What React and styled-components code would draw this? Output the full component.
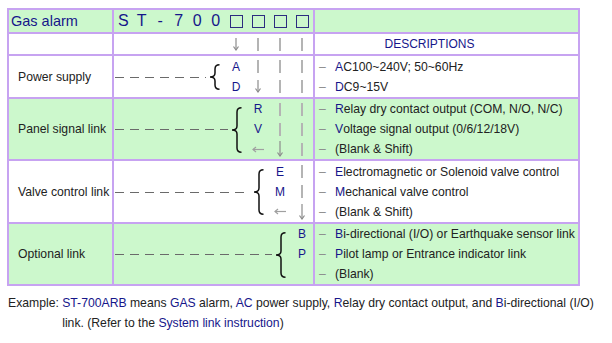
import React from 'react';
import styled, { createGlobalStyle } from 'styled-components';

const GlobalStyle = createGlobalStyle`
  body {
    margin: 0;
    background: #ffffff;
    font-family: "Liberation Sans", Arial, sans-serif;
  }
`;

const NAVY = '#16168a';
const GREEN = '#ccf8cc';
const PURPLE = '#c7a3f1';

const Page = styled.div`
  padding: 8px 7px;
  width: 612px;
  box-sizing: border-box;
`;

const Table = styled.div`
  width: 573px;
  display: flex;
  flex-direction: column;
  gap: 2px;
  padding: 2px;
  box-sizing: border-box;
  background: ${PURPLE};
`;

const Row = styled.div`
  display: grid;
  grid-template-columns: 103px 199px 1fr;
  gap: 2px;
  height: ${(p) => p.$h}px;
`;

const Cell = styled.div`
  background: ${(p) => (p.$green ? GREEN : '#ffffff')};
  display: flex;
  align-items: center;
  min-width: 0;
`;

const HeadTitle = styled.span`
  color: ${NAVY};
  font-size: 14.5px;
  padding-left: 2px;
`;

const Label = styled.span`
  color: #222;
  font-size: 12.2px;
  padding-left: 9px;
`;

const Track = styled.div`
  flex: 1;
  display: grid;
  grid-template-columns: 1fr repeat(4, 22px);
  grid-template-rows: repeat(${(p) => p.$n}, 20px);
  align-content: center;
  height: 100%;
`;

const Code = styled.div`
  grid-column: 1;
  grid-row: 1;
  display: flex;
  align-items: center;
`;

const CodeChar = styled.span`
  width: 18.5px;
  text-align: center;
  color: ${NAVY};
  font-size: 16px;
`;

const Slot = styled.div`
  grid-column: ${(p) => p.$col};
  grid-row: ${(p) => p.$row};
  display: flex;
  align-items: center;
  justify-content: center;
`;

const Box = styled.span`
  width: 11px;
  height: 11px;
  border: 1px solid #2c2c80;
`;

const Letter = styled.span`
  color: ${NAVY};
  font-size: 12px;
`;

const Pipe = styled.span`
  width: 1.5px;
  height: 13px;
  background: #b4b4b4;
`;

const Lead = styled.div`
  grid-column: 1 / ${(p) => p.$end};
  grid-row: 1 / -1;
  display: flex;
  align-items: center;
  padding: 1px 5px 0 1px;
`;

const Dashes = styled.div`
  flex: 1;
  height: 1px;
  background: repeating-linear-gradient(to right, #6a6a6a 0 9px, transparent 9px 15px);
  margin-right: 3px;
`;

const Desc = styled.div`
  display: grid;
  grid-template-rows: repeat(${(p) => p.$n}, 20px);
  align-content: center;
  height: 100%;
  padding-left: 4px;
`;

const DescLine = styled.div`
  display: flex;
  align-items: center;
  font-size: 12.2px;
  color: #222;
  white-space: nowrap;
`;

const Tick = styled.span`
  width: 16px;
  color: #8a8a8a;
`;

const Key = styled.span`
  color: ${NAVY};
`;

const DescHead = styled.span`
  flex: 1;
  text-align: center;
  padding-right: 34px;
  color: ${NAVY};
  font-size: 12px;
`;

const Example = styled.div`
  display: flex;
  margin-top: 7px;
  padding-left: 1px;
  font-size: 12.2px;
  line-height: 20px;
  color: #222;
  white-space: nowrap;
`;

const ExampleBody = styled.div`
  display: flex;
  flex-direction: column;
`;

const Brace = ({ h }) => (
  <svg width="11" height={h} viewBox={`0 0 11 ${h}`}>
    <path
      d={`M10.5 0.8 Q6 0.8 6 5 L6 ${h / 2 - 4} Q6 ${h / 2} 1 ${h / 2} Q6 ${h / 2} 6 ${h / 2 + 4} L6 ${h - 5} Q6 ${h - 0.8} 10.5 ${h - 0.8}`}
      fill="none"
      stroke="#111"
      strokeWidth="1.5"
    />
  </svg>
);

const DownArrow = ({ tall }) => (
  <svg width="8" height={tall ? 16 : 13} viewBox={`0 0 8 ${tall ? 16 : 13}`}>
    <line x1="4" y1="0" x2="4" y2={tall ? 15 : 12} stroke="#8c8c8c" strokeWidth="1.2" />
    <polyline
      points={tall ? '1.5,11.5 4,15 6.5,11.5' : '1.5,8.5 4,12 6.5,8.5'}
      fill="none"
      stroke="#8c8c8c"
      strokeWidth="1.2"
    />
  </svg>
);

const LeftArrow = () => (
  <svg width="12" height="7" viewBox="0 0 12 7">
    <line x1="1" y1="3.5" x2="12" y2="3.5" stroke="#a0a0a0" strokeWidth="1.2" />
    <polyline points="4,1 1,3.5 4,6" fill="none" stroke="#a0a0a0" strokeWidth="1.2" />
  </svg>
);

// marks: '|' pipe, 'dn' short down arrow, 'DN' long down arrow, 'lt' left arrow, else a letter
const renderMark = (m) => {
  if (!m) return null;
  if (m === '|') return <Pipe />;
  if (m === 'dn') return <DownArrow />;
  if (m === 'DN') return <DownArrow tall />;
  if (m === 'lt') return <LeftArrow />;
  return <Letter>{m}</Letter>;
};

const rows = [
  {
    label: 'Power supply',
    green: false,
    h: 41,
    brace: 1,
    braceH: 26,
    marks: [
      ['A', '|', '|', '|'],
      ['D', 'dn', '|', '|'],
    ],
    desc: [
      ['A', 'C100~240V; 50~60Hz'],
      ['D', 'C9~15V'],
    ],
  },
  {
    label: 'Panel signal link',
    green: true,
    h: 60,
    brace: 2,
    braceH: 46,
    marks: [
      [null, 'R', '|', '|'],
      [null, 'V', '|', '|'],
      [null, 'lt', 'DN', '|'],
    ],
    desc: [
      ['R', 'elay dry contact output (COM, N/O, N/C)'],
      ['V', 'oltage signal output (0/6/12/18V)'],
      ['', '(Blank & Shift)'],
    ],
  },
  {
    label: 'Valve control link',
    green: false,
    h: 61,
    brace: 3,
    braceH: 46,
    marks: [
      [null, null, 'E', '|'],
      [null, null, 'M', '|'],
      [null, null, 'lt', 'DN'],
    ],
    desc: [
      ['E', 'lectromagnetic or Solenoid valve control'],
      ['M', 'echanical valve control'],
      ['', '(Blank & Shift)'],
    ],
  },
  {
    label: 'Optional link',
    green: true,
    h: 60,
    brace: 4,
    braceH: 46,
    marks: [
      [null, null, null, 'B'],
      [null, null, null, 'P'],
      [null, null, null, null],
    ],
    desc: [
      ['B', 'i-directional (I/O) or Earthquake sensor link'],
      ['P', 'ilot lamp or Entrance indicator link'],
      ['', '(Blank)'],
    ],
  },
];

const App = () => (
  <Page>
    <GlobalStyle />
    <Table>
      <Row $h={22}>
        <Cell $green>
          <HeadTitle>Gas alarm</HeadTitle>
        </Cell>
        <Cell $green>
          <Track $n={1}>
            <Code>
              {['S', 'T', '-', '7', '0', '0'].map((c, i) => (
                <CodeChar key={i}>{c}</CodeChar>
              ))}
            </Code>
            {[2, 3, 4, 5].map((c) => (
              <Slot key={c} $col={c} $row={1}>
                <Box />
              </Slot>
            ))}
          </Track>
        </Cell>
        <Cell $green />
      </Row>

      <Row $h={20}>
        <Cell />
        <Cell>
          <Track $n={1}>
            {['dn', '|', '|', '|'].map((m, i) => (
              <Slot key={i} $col={i + 2} $row={1}>
                {renderMark(m)}
              </Slot>
            ))}
          </Track>
        </Cell>
        <Cell>
          <DescHead>DESCRIPTIONS</DescHead>
        </Cell>
      </Row>

      {rows.map((r) => (
        <Row key={r.label} $h={r.h}>
          <Cell $green={r.green}>
            <Label>{r.label}</Label>
          </Cell>
          <Cell $green={r.green}>
            <Track $n={r.marks.length}>
              <Lead $end={r.brace + 1}>
                <Dashes />
                <Brace h={r.braceH} />
              </Lead>
              {r.marks.map((line, li) =>
                line.map((m, ci) =>
                  m ? (
                    <Slot key={`${li}-${ci}`} $col={ci + 2} $row={li + 1}>
                      {renderMark(m)}
                    </Slot>
                  ) : null
                )
              )}
            </Track>
          </Cell>
          <Cell $green={r.green}>
            <Desc $n={r.desc.length}>
              {r.desc.map(([k, rest], i) => (
                <DescLine key={i}>
                  <Tick>–</Tick>
                  {k && <Key>{k}</Key>}
                  {rest}
                </DescLine>
              ))}
            </Desc>
          </Cell>
        </Row>
      ))}
    </Table>

    <Example>
      <span>Example:&nbsp;</span>
      <ExampleBody>
        <span>
          <Key>ST-700ARB</Key> means <Key>GAS</Key> alarm, <Key>AC</Key> power supply, <Key>R</Key>elay dry
          contact output, and <Key>B</Key>i-directional (I/O)
        </span>
        <span>
          link. (Refer to the <Key>System link instruction</Key>)
        </span>
      </ExampleBody>
    </Example>
  </Page>
);

export default App;
